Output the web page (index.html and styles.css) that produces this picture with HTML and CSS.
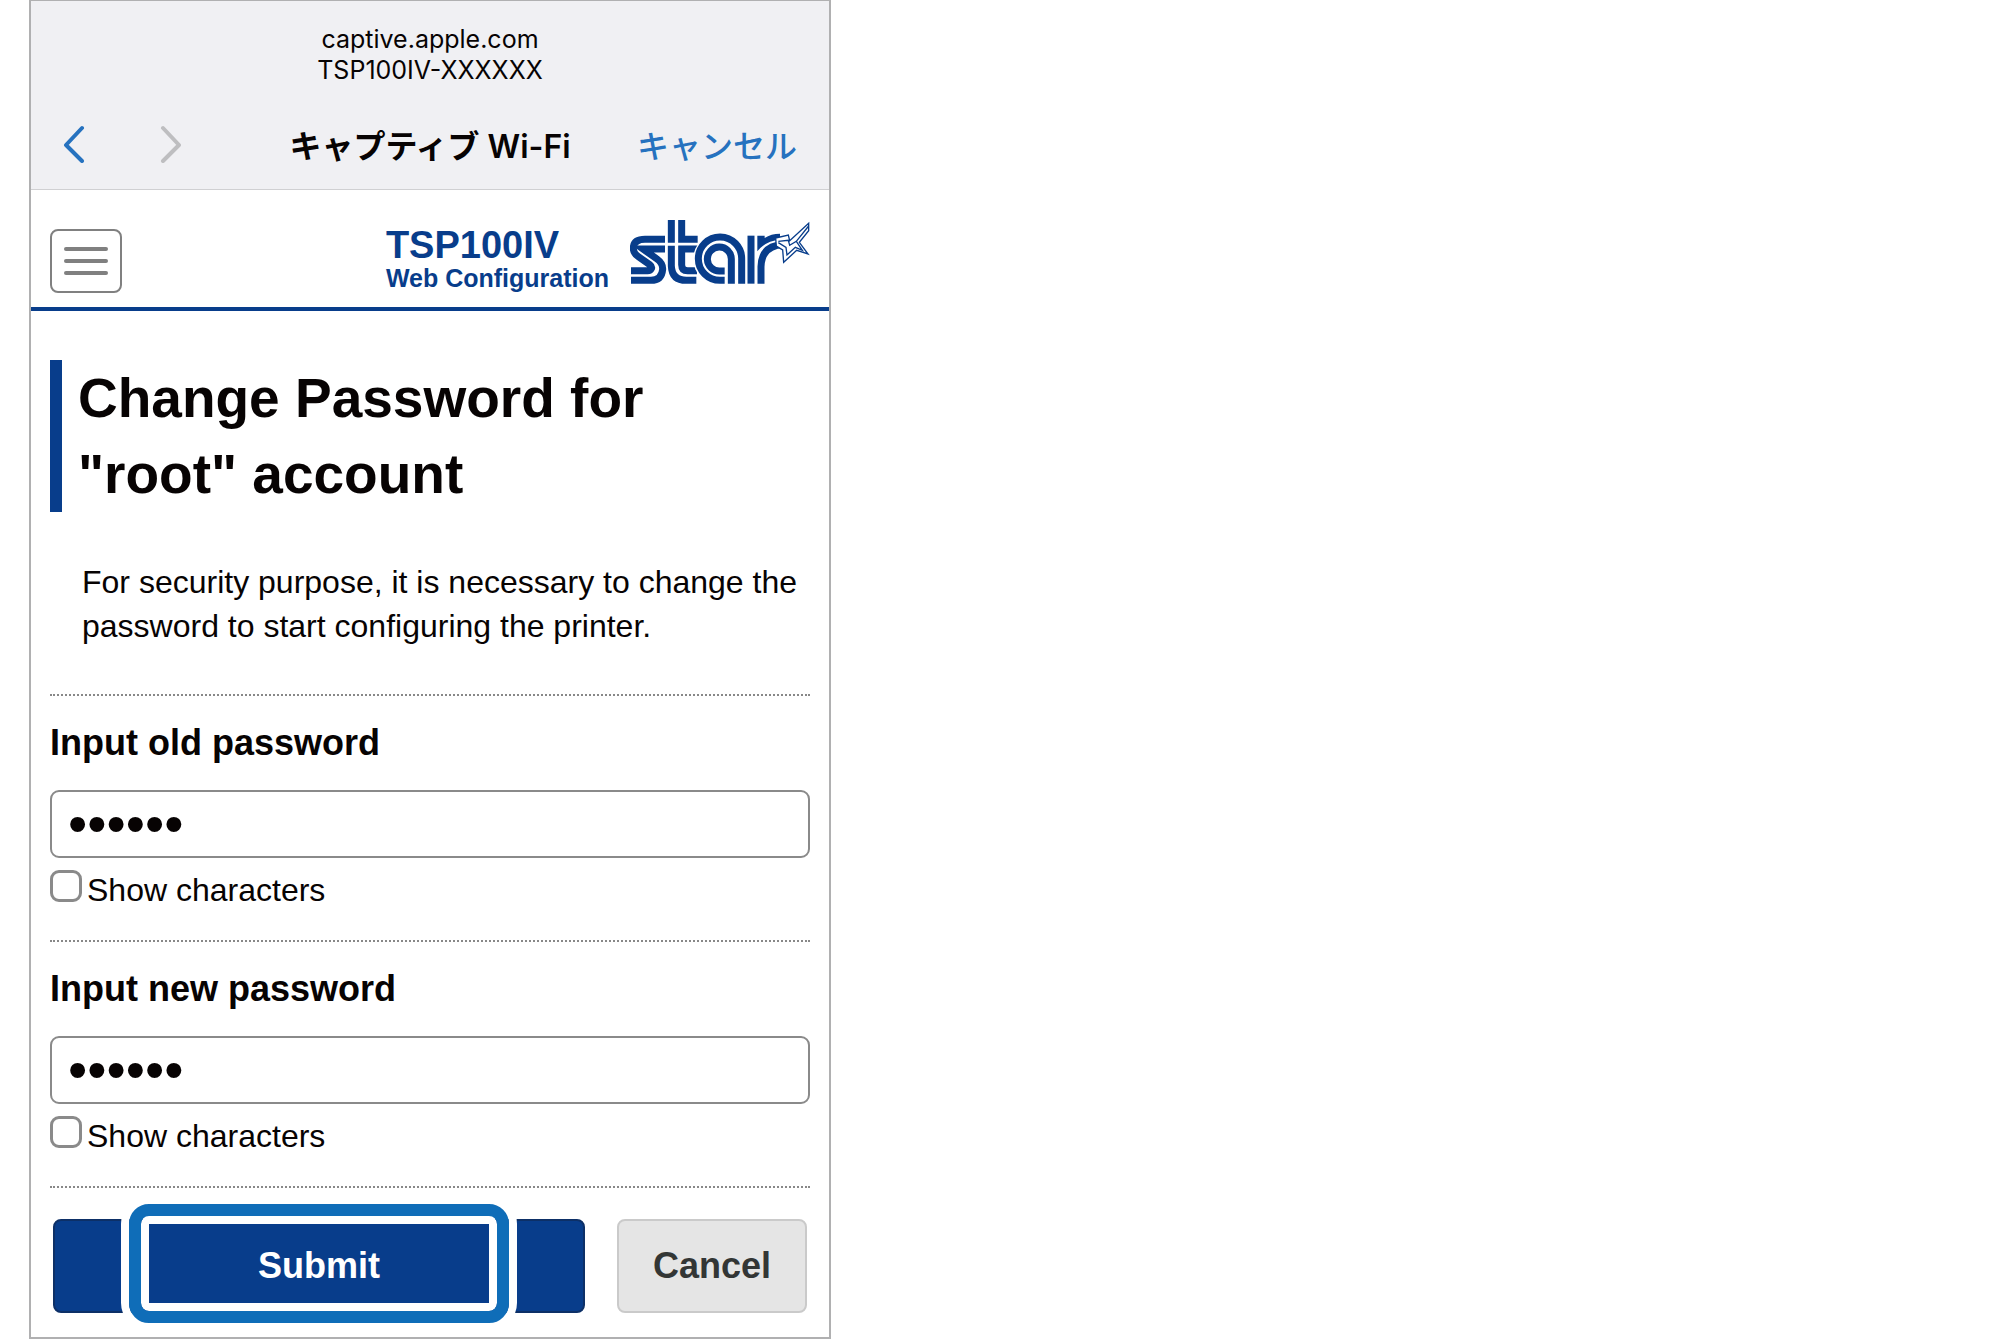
FILE: index.html
```
<!DOCTYPE html>
<html lang="en">
<head>
    <meta charset="UTF-8">
    <meta name="viewport" content="width=device-width, initial-scale=1.0">
    <title>TSP100IV Web Configuration</title>
    <link rel="stylesheet" href="styles.css">
</head>
<body>
    <div class="phone">
        <header class="browser-bar">
            <div class="address">
                <div>captive.apple.com</div>
                <div>TSP100IV-XXXXXX</div>
            </div>
            <nav class="browser-nav">
                <div class="arrows">
                    <button class="arrow" type="button" aria-label="Back">
                        <svg width="22" height="38" viewBox="0 0 22 38"><path d="M19 3 L3 20 L19 36"/></svg>
                    </button>
                    <button class="arrow" type="button" aria-label="Forward" disabled>
                        <svg width="22" height="38" viewBox="0 0 22 38"><path d="M4 3 L20 20 L4 36"/></svg>
                    </button>
                </div>
                <div class="page-name">キャプティブ Wi-Fi</div>
                <a class="close-link" href="#">キャンセル</a>
            </nav>
        </header>

        <div class="site-header">
            <button class="menu-button" type="button" aria-label="Menu">
                <span class="line"></span>
                <span class="line"></span>
                <span class="line"></span>
            </button>
            <div class="brand">
                <div class="brand-text">
                    <div class="model">TSP100IV</div>
                    <div class="subtitle">Web Configuration</div>
                </div>
                <svg class="logo" viewBox="33 30 540 192" role="img" aria-label="star">
                    <g class="band">
                        <path d="M138 88 H78 Q43 88 43 115 Q43 130 58 140 L92 164 Q100 170 97 176 Q94 182 86 182 H36"/>
                        <path d="M138 117 H72 L114 147 Q132 160 131 178 Q128 211 96 211 H36"/>
                        <path d="M157 30 V98 M157 107 V168 Q159 211 202 211 H232"/>
                        <path d="M188 30 V98 M178 88 H236 M188 107 V164 Q188 182 206 182 H234 M178 117 H236"/>
                    </g>
                    <circle class="gap" cx="303" cy="147" r="80"/>
                    <g class="band">
                        <path d="M317 211 H303 A65 65 0 1 1 368 147 V221"/>
                        <path d="M317 183 H303 A36 36 0 1 1 337 147 V221"/>
                        <path d="M396 77 V221"/>
                        <path d="M426 221 V170 Q428 106 492 104"/>
                    </g>
                    <path class="solid" d="M415 77 H437 V84 Q456 71 483 71 V89 Q440 92 415 124 Z"/>
                    <path class="outline star-body" d="M470 84 L508 75 L512 92 L569 40 V62 L541 97 L567 132 L533 121 L494 157 L491 120 L472 108 Z"/>
                    <path class="outline" d="M478 94 L508 91 L512 106 L532 94 L569 48 M532 94 L550 121 L529 112 L504 135 L501 112 L478 98"/>
                </svg>
            </div>
        </div>

        <main class="content">
            <h1>Change Password for "root" account</h1>
            <p class="intro">For security purpose, it is necessary to change the password to start configuring the printer.</p>

            <form>
                <div class="field">
                    <label class="field-label" for="old-password">Input old password</label>
                    <input class="password" type="password" id="old-password" value="public">
                    <div class="show">
                        <input type="checkbox" id="show-old">
                        <label for="show-old">Show characters</label>
                    </div>
                </div>

                <div class="field">
                    <label class="field-label" for="new-password">Input new password</label>
                    <input class="password" type="password" id="new-password" value="secret">
                    <div class="show">
                        <input type="checkbox" id="show-new">
                        <label for="show-new">Show characters</label>
                    </div>
                </div>

                <div class="buttons">
                    <button class="submit" type="submit">Submit<span class="highlight"></span></button>
                    <button class="cancel" type="button">Cancel</button>
                </div>
            </form>
        </main>
    </div>
</body>
</html>
```
FILE: styles.css
```
* {
    box-sizing: border-box;
}

body {
    margin: 0;
    background-color: #fff;
    color: #070303;
    font-family: "Liberation Sans", Arial, sans-serif;
    font-size: 32px;
}

button, input {
    font-family: inherit;
    margin: 0;
}

.phone {
    width: calc(40vw + 2px);
    margin-left: 29px;
    border: 2px solid #b0b0b1;
    border-top-width: 1px;
}

/* Browser bar */
.browser-bar {
    background-color: #f0f0f3;
    border-bottom: 1px solid #d0d0d2;
    padding: 23px 32px 24px;
    font-family: Inter, "Noto Sans CJK JP", sans-serif;
}

.address {
    text-align: center;
    font-size: 25px;
    line-height: 31px;
}

.browser-nav {
    display: grid;
    grid-template-columns: 1fr auto 1fr;
    align-items: center;
    margin-top: 35px;
    height: 44px;
    font-size: 32px;
}

.arrows {
    display: flex;
    gap: 74px;
}

.arrow {
    display: flex;
    padding: 0;
    border: 0;
    background: none;
}

.arrow path {
    fill: none;
    stroke: #2672bf;
    stroke-width: 4;
    stroke-linecap: round;
    stroke-linejoin: round;
}

.arrow:disabled path {
    stroke: #bebec0;
}

.page-name {
    font-weight: 600;
}

.close-link {
    justify-self: end;
    color: #2672bf;
    font-weight: 500;
    text-decoration: none;
}

/* Site header */
.site-header {
    display: flex;
    justify-content: space-between;
    align-items: flex-end;
    padding: 30px 19px 14px;
    border-bottom: 4px solid #083d8b;
}

.menu-button {
    display: flex;
    flex-direction: column;
    align-items: center;
    justify-content: center;
    gap: 8px;
    width: 72px;
    height: 64px;
    border: 2px solid #808080;
    border-radius: 8px;
    background-color: #fff;
}

.line {
    width: 44px;
    height: 4px;
    border-radius: 2px;
    background-color: #808080;
}

.brand {
    display: flex;
    gap: 21px;
    color: #083d8b;
    font-weight: bold;
}

.brand-text {
    padding-top: 6px;
}

.model {
    font-size: 38px;
    line-height: 38px;
}

.subtitle {
    font-size: 25px;
    line-height: 29px;
}

.logo {
    width: 180px;
    height: 64px;
}

.band path {
    fill: none;
    stroke: #083d8b;
    stroke-width: 21;
}

.gap {
    fill: #fff;
}

.solid {
    fill: #083d8b;
}

.outline {
    fill: none;
    stroke: #083d8b;
    stroke-width: 4;
}

.star-body {
    fill: #fff;
}

/* Content */
.content {
    padding: 49px 19px 24px;
}

h1 {
    margin: 0;
    padding-left: 16px;
    border-left: 12px solid #083d8b;
    font-size: 55px;
    line-height: 76px;
}

.intro {
    margin: 48px 0 46px;
    padding-left: 32px;
    line-height: 44px;
}

.field {
    height: 246px;
    border-top: 2px dotted #888;
    padding-top: 25px;
}

.field-label {
    display: block;
    font-size: 36px;
    font-weight: bold;
    line-height: 44px;
}

.password {
    display: block;
    width: 100%;
    height: 68px;
    margin-top: 25px;
    padding: 0 16px;
    border: 2px solid #8a8a8a;
    border-radius: 9px;
    background-color: #fff;
    color: #070303;
    font-size: 55px;
}

.show {
    display: flex;
    gap: 5px;
    margin-top: 12px;
    line-height: 40px;
}

.show input {
    appearance: none;
    width: 32px;
    height: 32px;
    border: 3px solid #8a8a8a;
    border-radius: 9px;
    background-color: #fff;
}

.buttons {
    display: grid;
    grid-template-columns: 14fr 5fr;
    gap: 32px;
    border-top: 2px dotted #888;
    padding: 31px 3px 0;
}

.buttons button {
    height: 94px;
    border-radius: 8px;
    font-size: 36px;
    font-weight: bold;
}

.submit {
    position: relative;
    border: 2px solid #0d3067;
    background-color: #083d8b;
    color: #fff;
}

.cancel {
    border: 2px solid #cacaca;
    background-color: #e5e5e5;
    color: #333635;
}

/* Ring drawn over the submit button */
.highlight {
    position: absolute;
    inset: -17px 14% -12px;
    border: 12px solid #0f6db8;
    border-radius: 20px;
    box-shadow: 0 0 0 8px #fff, inset 0 0 0 8px #fff;
}
```
